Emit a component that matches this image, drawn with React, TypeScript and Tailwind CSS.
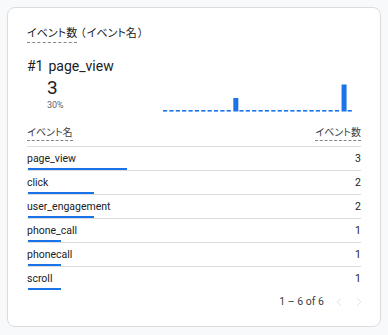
import { ChevronLeft, ChevronRight } from "lucide-react";

const rows = [
  { name: "page_view", count: 3 },
  { name: "click", count: 2 },
  { name: "user_engagement", count: 2 },
  { name: "phone_call", count: 1 },
  { name: "phonecall", count: 1 },
  { name: "scroll", count: 1 },
];

// 30 days, only two with events
const daily = Array.from({ length: 30 }, (_, i) => (i === 11 ? 1 : i === 28 ? 2 : 0));

function Sparkline() {
  const slot = 191 / 30;
  return (
    <svg width="192" height="31" viewBox="0 0 192 31" className="block">
      {daily.map((v, i) => {
        const x = i * slot;
        if (v === 0) {
          return <rect key={i} x={x} y={29} width={4.2} height={1.6} fill="#1a73e8" />;
        }
        const h = v * 13.5;
        return <rect key={i} x={x + 0.3} y={30.5 - h} width={5} height={h} fill="#1a73e8" />;
      })}
    </svg>
  );
}

export default function App() {
  const max = Math.max(...rows.map((r) => r.count));
  return (
    <div
      className="min-h-[335px] bg-[#f8f9fa] px-[7px] pt-[7px] pb-[8px]"
      style={{ fontFamily: 'Roboto, "Noto Sans CJK JP", sans-serif' }}
    >
      <div className="h-[320px] rounded-[8px] border border-[#dadce0] bg-white px-[19px] pt-[18px] text-[#202124]">
        <div className="flex h-[16px] items-center text-[11px] leading-[16px] [font-feature-settings:'palt']">
          <span className="border-b border-dashed border-[#80868b] leading-[17px]">イベント数</span>
          <span className="pr-[1px] pl-[3px]">（</span>
          <span>イベント名</span>
          <span className="pl-[1px]">）</span>
        </div>

        <div className="mt-[14px] flex h-[20px] items-center gap-[5px] text-[14px] leading-[20px]">
          <span>#1</span>
          <span>page_view</span>
        </div>

        <div className="flex items-start justify-between">
          <div className="pl-[20px]">
            <div className="text-[19px] leading-[24px]">3</div>
            <div className="text-[9px] leading-[10px] text-[#5f6368]">30%</div>
          </div>
          <div className="mt-[5px] mr-[6px]">
            <Sparkline />
          </div>
        </div>

        <div className="mt-[14px] flex items-end justify-between border-b border-[#dadce0] pb-[5px] text-[10px] leading-[14px] text-[#3c4043] [font-feature-settings:'palt']">
          <span className="border-b border-dashed border-[#80868b]">イベント名</span>
          <span className="border-b border-dashed border-[#80868b]">イベント数</span>
        </div>

        {rows.map((r, i) => (
          <div
            key={r.name}
            className={i < rows.length - 1 ? "border-b border-[#dadce0]" : ""}
          >
            <div className="flex h-[21px] items-center justify-between pt-[3px] text-[10.5px] text-[#202124]">
              <span>{r.name}</span>
              <span>{r.count}</span>
            </div>
            <div className="h-[2px] pl-[1px]">
              <div className="h-[2px] bg-[#1a73e8]" style={{ width: `${(r.count / max) * 99}px` }} />
            </div>
          </div>
        ))}

        <div className="mt-[4px] mr-[-5px] flex h-[16px] items-center justify-end gap-[6px] text-[10.5px] text-[#3c4043]">
          <span className="mr-[2px]">1 – 6 of 6</span>
          <ChevronLeft size={14} strokeWidth={1.5} className="text-[#dadce0]" />
          <ChevronRight size={14} strokeWidth={1.5} className="text-[#dadce0]" />
        </div>
      </div>
    </div>
  );
}
